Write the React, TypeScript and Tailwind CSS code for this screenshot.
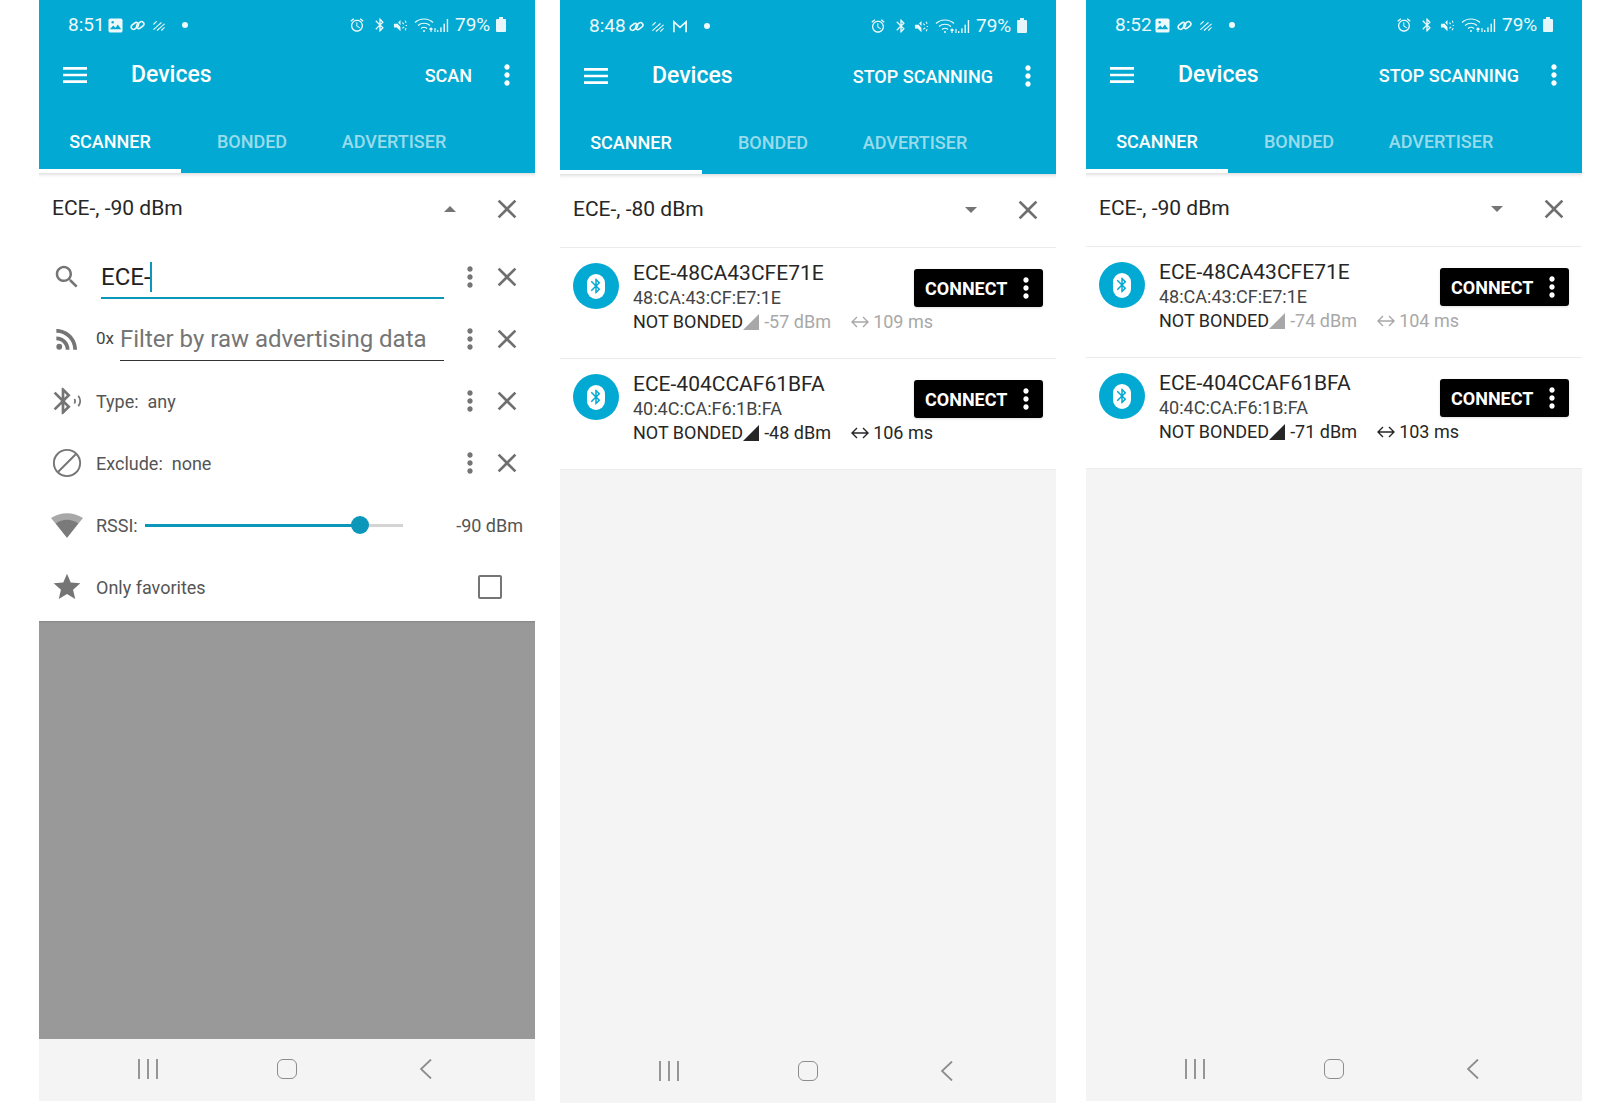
import type { ReactNode } from 'react';

const P = {
  menu: 'M3 18h18v-2H3v2zm0-5h18v-2H3v2zm0-7v2h18V6H3z',
  search: 'M15.5 14h-.79l-.28-.27C15.41 12.59 16 11.11 16 9.5 16 5.91 13.09 3 9.5 3S3 5.91 3 9.5 5.91 16 9.5 16c1.61 0 3.09-.59 4.23-1.57l.27.28v.79l5 4.99L20.49 19l-4.99-5zm-6 0C7.01 14 5 11.99 5 9.5S7.01 5 9.5 5 14 7.01 14 9.5 11.99 14 9.5 14z',
  close: 'M19 6.41L17.59 5 12 10.59 6.41 5 5 6.41 10.59 12 5 17.59 6.41 19 12 13.41 17.59 19 19 17.59 13.41 12z',
  more: 'M12 8c1.1 0 2-.9 2-2s-.9-2-2-2-2 .9-2 2 .9 2 2 2zm0 2c-1.1 0-2 .9-2 2s.9 2 2 2 2-.9 2-2-.9-2-2-2zm0 6c-1.1 0-2 .9-2 2s.9 2 2 2 2-.9 2-2-.9-2-2-2z',
  rss: 'M4 4.44v2.83c7.03 0 12.73 5.7 12.73 12.73h2.83c0-8.59-6.97-15.56-15.56-15.56zm0 5.66v2.83c3.9 0 7.07 3.17 7.07 7.07h2.83c0-5.47-4.43-9.9-9.9-9.9zM6.18 15.64a2.18 2.18 0 1 0 0 4.36 2.18 2.18 0 0 0 0-4.36z',
  bt: 'M17.71 7.71L12 2h-1v7.59L6.41 5 5 6.41 10.59 12 5 17.59 6.41 19 11 14.41V22h1l5.71-5.71-4.3-4.29 4.3-4.29zM13 5.83l1.88 1.88L13 9.59V5.83zm1.88 10.46L13 18.17v-3.76l1.88 1.88z',
  star: 'M12 17.27L18.18 21l-1.64-7.03L22 9.24l-7.19-.61L12 2 9.19 8.63 2 9.24l5.46 4.73L5.82 21z',
  alarm: 'M22 5.72l-4.6-3.86-1.29 1.53 4.6 3.86L22 5.72zM7.88 3.39L6.6 1.86 2 5.71l1.29 1.53 4.59-3.85zM12.5 8H11v6l4.75 2.85.75-1.23-4-2.37V8zM12 4c-4.97 0-9 4.03-9 9s4.02 9 9 9c4.97 0 9-4.03 9-9s-4.03-9-9-9zm0 16c-3.87 0-7-3.13-7-7s3.13-7 7-7 7 3.13 7 7-3.13 7-7 7z',
};

function Icon({ d, className }: { d: string; className: string }) {
  return (
    <svg viewBox="0 0 24 24" fill="currentColor" className={className}>
      <path d={d} />
    </svg>
  );
}

function PicIcon() {
  return (
    <svg viewBox="0 0 16 16" className="w-[15px] h-[15px]">
      <rect x="0.5" y="0.5" width="15" height="15" rx="2" fill="#eef9fc" />
      <path d="M2 12l3.5-4 2.5 2.5L10.5 7 14 12z" fill="#02a9d2" />
      <circle cx="5" cy="4.5" r="1.3" fill="#02a9d2" />
    </svg>
  );
}

function LinkIcon() {
  return (
    <svg viewBox="0 0 16 16" fill="none" stroke="#eef9fc" strokeWidth="1.7" className="w-[15px] h-[15px]">
      <rect x="0.8" y="6" width="8.6" height="5" rx="2.5" transform="rotate(-40 5 8.5)" />
      <rect x="6.6" y="5" width="8.6" height="5" rx="2.5" transform="rotate(-40 11 7.5)" />
    </svg>
  );
}

function WavyIcon() {
  return (
    <svg viewBox="0 0 16 16" fill="none" stroke="#eef9fc" strokeWidth="1.3" strokeLinecap="round" className="w-[14px] h-[14px]">
      <path d="M2 7l3-3M2 13l9-8M6 14l8-7M11 14l3-3" strokeDasharray="3 1.2" />
    </svg>
  );
}

function MailIcon() {
  return (
    <svg viewBox="0 0 16 16" fill="none" stroke="#eef9fc" strokeWidth="1.8" className="w-[16px] h-[15px]">
      <path d="M1.5 14V3l6.5 6 6.500-6v11" />
    </svg>
  );
}

function MuteIcon() {
  return (
    <svg viewBox="0 0 16 16" className="w-[15px] h-[15px]">
      <path d="M1 6h3l4-4v12l-4-4H1z" fill="#eef9fc" />
      <path d="M2 2l11 12" stroke="#02a9d2" strokeWidth="1.500" />
      <path d="M10 5l1.500 1.500M10 11l2-1.500M13 3l1 2M13.500 8h1.500M13 13l1-2" stroke="#eef9fc" strokeWidth="1.200" />
    </svg>
  );
}

function WifiIcon() {
  return (
    <svg viewBox="0 0 22 16" fill="none" stroke="#eef9fc" strokeWidth="1.200" className="w-[22px] h-[16px]">
      <path d="M1 5.500C6 .8 14 .8 19 5.500M4 8.500c3.400-3 8.600-3 12 0M7 11.500c1.800-1.500 4.200-1.500 6 0" />
      <circle cx="10" cy="14" r="1" fill="#eef9fc" stroke="none" />
      <path d="M17 15v-4m-1.500 1.500L17 11l1.500 1.500M21 11v4" />
    </svg>
  );
}

function SignalIcon() {
  return (
    <svg viewBox="0 0 14 16" fill="#eef9fc" className="w-[13px] h-[15px]">
      <rect x="0" y="13" width="1.500" height="2" />
      <rect x="3.500" y="10" width="1.500" height="5" />
      <rect x="7" y="6" width="1.500" height="9" />
      <rect x="10.500" y="1" width="1.500" height="14" />
    </svg>
  );
}

function StatusBar({ time, left }: { time: string; left: ReactNode[] }) {
  return (
    <div className="h-[50px] flex items-center pl-[29px] pr-[29px] text-[19px] text-[#eef9fc]">
      <span className="w-[33px] mr-[7px] whitespace-nowrap">{time}</span>
      <div className="flex items-center gap-[7px]">
        {left}
        <span className="ml-[9px] w-[6px] h-[6px] rounded-full bg-[#eef9fc]" />
      </div>
      <div className="ml-auto flex items-center">
        <Icon d={P.alarm} className="w-[16px] h-[16px] mr-[7px]" />
        <Icon d={P.bt} className="w-[16px] h-[16px] mr-[5px]" />
        <MuteIcon />
        <span className="ml-[6px]"><WifiIcon /></span>
        <span className="ml-[1px]"><SignalIcon /></span>
        <span className="ml-[5px] mr-[4px] w-[37px] whitespace-nowrap">79%</span>
        <span className="relative w-[10px] h-[13px] rounded-[1px] bg-[#e6f6fa]">
          <span className="absolute -top-[2px] left-[3px] w-[4px] h-[2px] bg-[#e6f6fa]" />
        </span>
      </div>
    </div>
  );
}

function AppHeader({ action }: { action: string }) {
  return (
    <div className="bg-[#02a9d2] text-white">
      <div className="h-[50px] flex items-center pl-[20px] pr-[12px]">
        <Icon d={P.menu} className="w-[32px] h-[32px]" />
        <span className="ml-[40px] text-[23px] font-medium">Devices</span>
        <span className="ml-auto mr-[19px] text-[18px] font-medium uppercase">{action}</span>
        <Icon d={P.more} className="w-[32px] h-[32px]" />
      </div>
      <div className="mt-[13px] h-[60px] flex text-[18px] font-medium">
        <div className="w-[142px] flex items-center justify-center border-b-4 border-white">SCANNER</div>
        <div className="w-[142px] flex items-center justify-center pb-[4px] text-white/60">BONDED</div>
        <div className="w-[142px] flex items-center justify-center pb-[4px] text-white/60">ADVERTISER</div>
      </div>
    </div>
  );
}

function FilterHeader({ label, open }: { label: string; open: boolean }) {
  return (
    <div className="h-[73px] flex items-center pl-[13px] pr-[12px] pb-[1px] bg-white shadow-[inset_0_5px_4px_-4px_rgba(0,0,0,0.18)]">
      <span className="text-[21px] text-[#262626]">{label}</span>
      <span
        className={
          open
            ? 'ml-auto mr-[35px] w-0 h-0 border-x-[6px] border-x-transparent border-b-[6px] border-b-[#757575]'
            : 'ml-auto mr-[35px] w-0 h-0 border-x-[6px] border-x-transparent border-t-[6px] border-t-[#757575]'
        }
      />
      <Icon d={P.close} className="w-[32px] h-[32px] text-[#6f6f6f]" />
    </div>
  );
}

function RowActions() {
  return (
    <div className="ml-auto flex items-center gap-[5px]">
      <Icon d={P.more} className="w-[32px] h-[32px] text-[#757575]" />
      <Icon d={P.close} className="w-[32px] h-[32px] text-[#6f6f6f]" />
    </div>
  );
}

function FilterRow({ icon, children, actions = true }: { icon: ReactNode; children: ReactNode; actions?: boolean }) {
  return (
    <div className="h-[62px] flex items-center pl-[12px] pr-[12px]">
      <div className="w-[32px] h-[32px] flex items-center justify-center text-[#757575]">{icon}</div>
      {children}
      {actions && <RowActions />}
    </div>
  );
}

function FilterPanel() {
  return (
    <div className="flex-1 flex flex-col">
      <div className="bg-white pb-[3px]">
        <FilterRow icon={<Icon d={P.search} className="w-[30px] h-[30px]" />}>
          <div className="ml-[18px] w-[343px] h-[42px] mt-[1px] border-b-2 border-[#0a97ba] flex items-center text-[24px] text-[#222]">
            ECE-<span className="w-[2px] h-[30px] bg-[#0a97ba] -ml-[1px]" />
          </div>
        </FilterRow>
        <FilterRow
          icon={<Icon d={P.rss} className="w-[32px] h-[32px]" />}
        >
          <span className="ml-[13px] w-[24px] text-[17px] text-[#444]">0x</span>
          <div className="w-[324px] h-[42px] mt-[1px] border-b border-[#333] flex items-center text-[24px] text-[#757575] whitespace-nowrap">
            Filter by raw advertising data
          </div>
        </FilterRow>
        <FilterRow
          icon={
            <svg viewBox="0 0 24 24" className="w-[32px] h-[32px]" fill="currentColor">
              <path d={P.bt} transform="translate(-3 0)" />
              <path d="M17.500 10.500c.7 1 .7 2.300 0 3.300M20.500 8c1.700 2.500 1.700 5.700 0 8" stroke="currentColor" strokeWidth="1.300" fill="none" />
            </svg>
          }
        >
          <span className="ml-[13px] text-[18px] text-[#555] whitespace-pre">Type:  any</span>
        </FilterRow>
        <FilterRow
          icon={
            <svg viewBox="0 0 24 24" fill="none" stroke="currentColor" strokeWidth="1.500" className="w-[30px] h-[30px]">
              <circle cx="12" cy="12" r="10.500" />
              <path d="M5 19L19 5" />
            </svg>
          }
        >
          <span className="ml-[13px] text-[18px] text-[#555] whitespace-pre">Exclude:  none</span>
        </FilterRow>
        <FilterRow
          actions={false}
          icon={
            <svg viewBox="0 0 30 24" className="w-[32px] h-[26px]">
              <path d="M0 5.500C9-.5 21-.5 30 5.500L15 24z" fill="#a8a8a8" />
              <path d="M4.500 10.500C11 6 19 6 25.500 10.500L15 24z" fill="#7a7a7a" />
            </svg>
          }
        >
          <span className="ml-[13px] w-[49px] text-[18px] text-[#555]">RSSI:</span>
          <div className="relative w-[258px] h-[3px] bg-[#d4d4d4]">
            <div className="absolute inset-y-0 left-0 w-[215px] bg-[#0a97ba]" />
            <div className="absolute left-[206px] -top-[8px] w-[18px] h-[18px] rounded-full bg-[#0a97ba]" />
          </div>
          <span className="ml-auto text-[18px] text-[#555]">-90 dBm</span>
        </FilterRow>
        <FilterRow actions={false} icon={<Icon d={P.star} className="w-[32px] h-[32px]" />}>
          <span className="ml-[13px] text-[18px] text-[#555]">Only favorites</span>
          <span className="ml-auto mr-[21px] w-[24px] h-[24px] rounded-[2px] border-[2.5px] border-[#757575]" />
        </FilterRow>
      </div>
      <div className="flex-1 bg-[#999999] shadow-[inset_0_2px_2px_-1px_rgba(0,0,0,0.12)]" />
    </div>
  );
}

type Device = { name: string; mac: string; rssi: string; interval: string; faded?: boolean };

function DeviceRow({ device }: { device: Device }) {
  const stats = device.faded ? 'text-[#a8a8a8]' : 'text-[#262626]';
  return (
    <div className="h-[111px] shrink-0 flex bg-white border-t border-[#ececec] pl-[13px] pr-[13px] pt-[15px]">
      <div className="relative w-[46px] h-[46px] rounded-full bg-[#02a9d2] flex items-center justify-center">
        <div className="w-[18px] h-[25px] rounded-[9px] bg-white text-[#02a9d2] flex items-center justify-center">
          <Icon d={P.bt} className="w-[20px] h-[20px]" />
        </div>
      </div>
      <div className="ml-[14px] w-[281px] flex flex-col text-[#262626]">
        <span className="text-[21px] leading-[26px] -mt-[3px]">{device.name}</span>
        <span className="text-[18px] leading-[24px] text-[#444]">{device.mac}</span>
        <div className="flex items-center text-[18px] leading-[24px] whitespace-nowrap">
          <span className="w-[158px]">NOT BONDED</span>
          <span className={`flex items-center ${stats}`}>
            <svg viewBox="0 0 16 16" fill="currentColor" className="w-[16px] h-[16px] mr-[5px]">
              <path d="M0 16L16 0v16z" />
            </svg>
            <span className="w-[87px]">{device.rssi}</span>
            <svg viewBox="0 0 18 14" fill="none" stroke="currentColor" strokeWidth="1.400" className="w-[18px] h-[14px] mr-[4px]">
              <path d="M1 7h16M6 2L1 7l5 5M12 2l5 5-5 5" />
            </svg>
            {device.interval}
          </span>
        </div>
      </div>
      <div className="mt-[6px] ml-auto w-[129px] h-[38px] rounded-[3px] bg-black text-white flex items-center pl-[11px] shadow-sm">
        <span className="text-[18px] font-bold">CONNECT</span>
        <Icon d={P.more} className="ml-auto mr-[1px] w-[32px] h-[32px]" />
      </div>
    </div>
  );
}

function DeviceList({ devices }: { devices: Device[] }) {
  return (
    <div className="flex-1 flex flex-col bg-[#f4f4f4]">
      {devices.map((d) => (
        <DeviceRow key={d.name} device={d} />
      ))}
      <div className="border-t border-[#ececec]" />
    </div>
  );
}

function NavBar() {
  return (
    <div className="h-[62px] shrink-0 bg-[#f4f4f4] flex justify-center items-center pb-[3px] text-[#8c8c8c]">
      <div className="w-[139px] flex justify-center">
        <svg viewBox="0 0 20 20" fill="none" stroke="currentColor" strokeWidth="1.800" className="w-[20px] h-[20px]">
          <path d="M1 0v20M10 0v20M19 0v20" />
        </svg>
      </div>
      <div className="w-[139px] flex justify-center">
        <span className="w-[20px] h-[20px] rounded-[6px] border-[1.5px] border-[#8c8c8c]" />
      </div>
      <div className="w-[139px] flex justify-center">
        <svg viewBox="0 0 12 20" fill="none" stroke="currentColor" strokeWidth="1.800" className="w-[12px] h-[20px]">
          <path d="M11 0.500L1 10l10 9.500" />
        </svg>
      </div>
    </div>
  );
}

const list80: Device[] = [
  { name: 'ECE-48CA43CFE71E', mac: '48:CA:43:CF:E7:1E', rssi: '-57 dBm', interval: '109 ms', faded: true },
  { name: 'ECE-404CCAF61BFA', mac: '40:4C:CA:F6:1B:FA', rssi: '-48 dBm', interval: '106 ms' },
];

const list90: Device[] = [
  { name: 'ECE-48CA43CFE71E', mac: '48:CA:43:CF:E7:1E', rssi: '-74 dBm', interval: '104 ms', faded: true },
  { name: 'ECE-404CCAF61BFA', mac: '40:4C:CA:F6:1B:FA', rssi: '-71 dBm', interval: '103 ms' },
];

export default function App() {
  return (
    <div className="w-[1600px] h-[1103px] bg-white flex items-start pl-[39px] font-[Roboto,sans-serif] overflow-hidden">
      {/* filter open */}
      <div className="w-[496px] h-[1101px] flex flex-col bg-[#02a9d2]">
        <StatusBar time="8:51" left={[<PicIcon key="p" />, <LinkIcon key="l" />, <WavyIcon key="w" />]} />
        <AppHeader action="SCAN" />
        <FilterHeader label="ECE-, -90 dBm" open />
        <FilterPanel />
        <NavBar />
      </div>

      {/* scanning */}
      <div className="ml-[25px] w-[496px] h-[1103px] flex flex-col bg-[#02a9d2] pt-[1px]">
        <StatusBar time="8:48" left={[<LinkIcon key="l" />, <WavyIcon key="w" />, <MailIcon key="m" />]} />
        <AppHeader action="STOP SCANNING" />
        <FilterHeader label="ECE-, -80 dBm" open={false} />
        <DeviceList devices={list80} />
        <NavBar />
      </div>

      <div className="ml-[30px] w-[496px] h-[1101px] flex flex-col bg-[#02a9d2]">
        <StatusBar time="8:52" left={[<PicIcon key="p" />, <LinkIcon key="l" />, <WavyIcon key="w" />]} />
        <AppHeader action="STOP SCANNING" />
        <FilterHeader label="ECE-, -90 dBm" open={false} />
        <DeviceList devices={list90} />
        <NavBar />
      </div>
    </div>
  );
}
